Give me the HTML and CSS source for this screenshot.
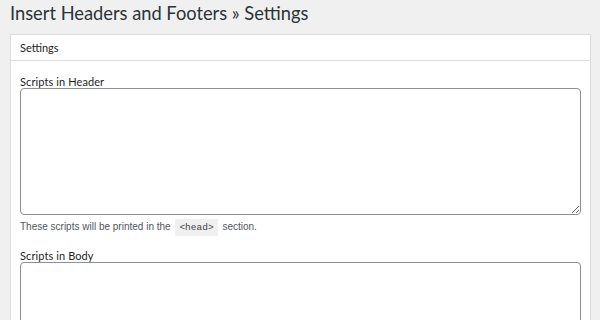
FILE: index.html
```html
<!DOCTYPE html>
<html lang="en">
<head>
    <meta charset="UTF-8">
    <title>Insert Headers and Footers » Settings</title>
    <link rel="stylesheet" href="styles.css">
</head>
<body>
    <div class="wrap">
        <!-- Page title -->
        <h1>Insert Headers and Footers » Settings</h1>

        <!-- Settings box -->
        <div class="postbox">
            <h2 class="postbox-title">Settings</h2>
            <div class="inside">
                <label for="ihaf_insert_header">Scripts in Header</label>
                <textarea id="ihaf_insert_header" class="code-field"></textarea>
                <p class="description">These scripts will be printed in the <code>&lt;head&gt;</code> section.</p>

                <label for="ihaf_insert_body">Scripts in Body</label>
                <textarea id="ihaf_insert_body" class="code-field"></textarea>
            </div>
        </div>
    </div>
</body>
</html>
```

FILE: styles.css
```css
/* General Styles */
body {
    margin: 0;
    background-color: #f0f0f1;
    color: #1d2327;
    font-family: 'Lato', sans-serif;
    overflow: hidden;
}

.wrap {
    padding: 0 9px 0 10px;
}

h1 {
    font-size: 18.3px;
    font-weight: 400;
    line-height: 26px;
    color: #2c3338;
    margin: 0;
    padding: 0 0 8px 0;
}

.postbox {
    background-color: #fff;
    border: 1px solid #dcdcde;
    width: 579px;
}

.postbox-title {
    font-size: 11px;
    font-weight: 400;
    line-height: 14px;
    margin: 0;
    padding: 6px 9px 5px;
    border-bottom: 1px solid #dcdcde;
}

.inside {
    padding: 14px 9px 0;
}

label {
    display: block;
    font-size: 11px;
    line-height: 13px;
    letter-spacing: 0.1px;
}

.code-field {
    display: block;
    box-sizing: border-box;
    width: 561px;
    height: 127px;
    margin: 0;
    border: 1px solid #8c8f94;
    border-radius: 4px;
    background: #fff;
}

.description {
    font-family: 'Liberation Sans', sans-serif;
    font-size: 10px;
    color: #50575e;
    margin: 4px 0 13px;
    line-height: 16px;
}

.description code {
    font-family: 'Liberation Mono', monospace;
    font-size: 9.5px;
    background-color: #f0f0f1;
    padding: 3px 4px 3px;
    margin: 0 2px;
    color: #3c434a;
}
```
